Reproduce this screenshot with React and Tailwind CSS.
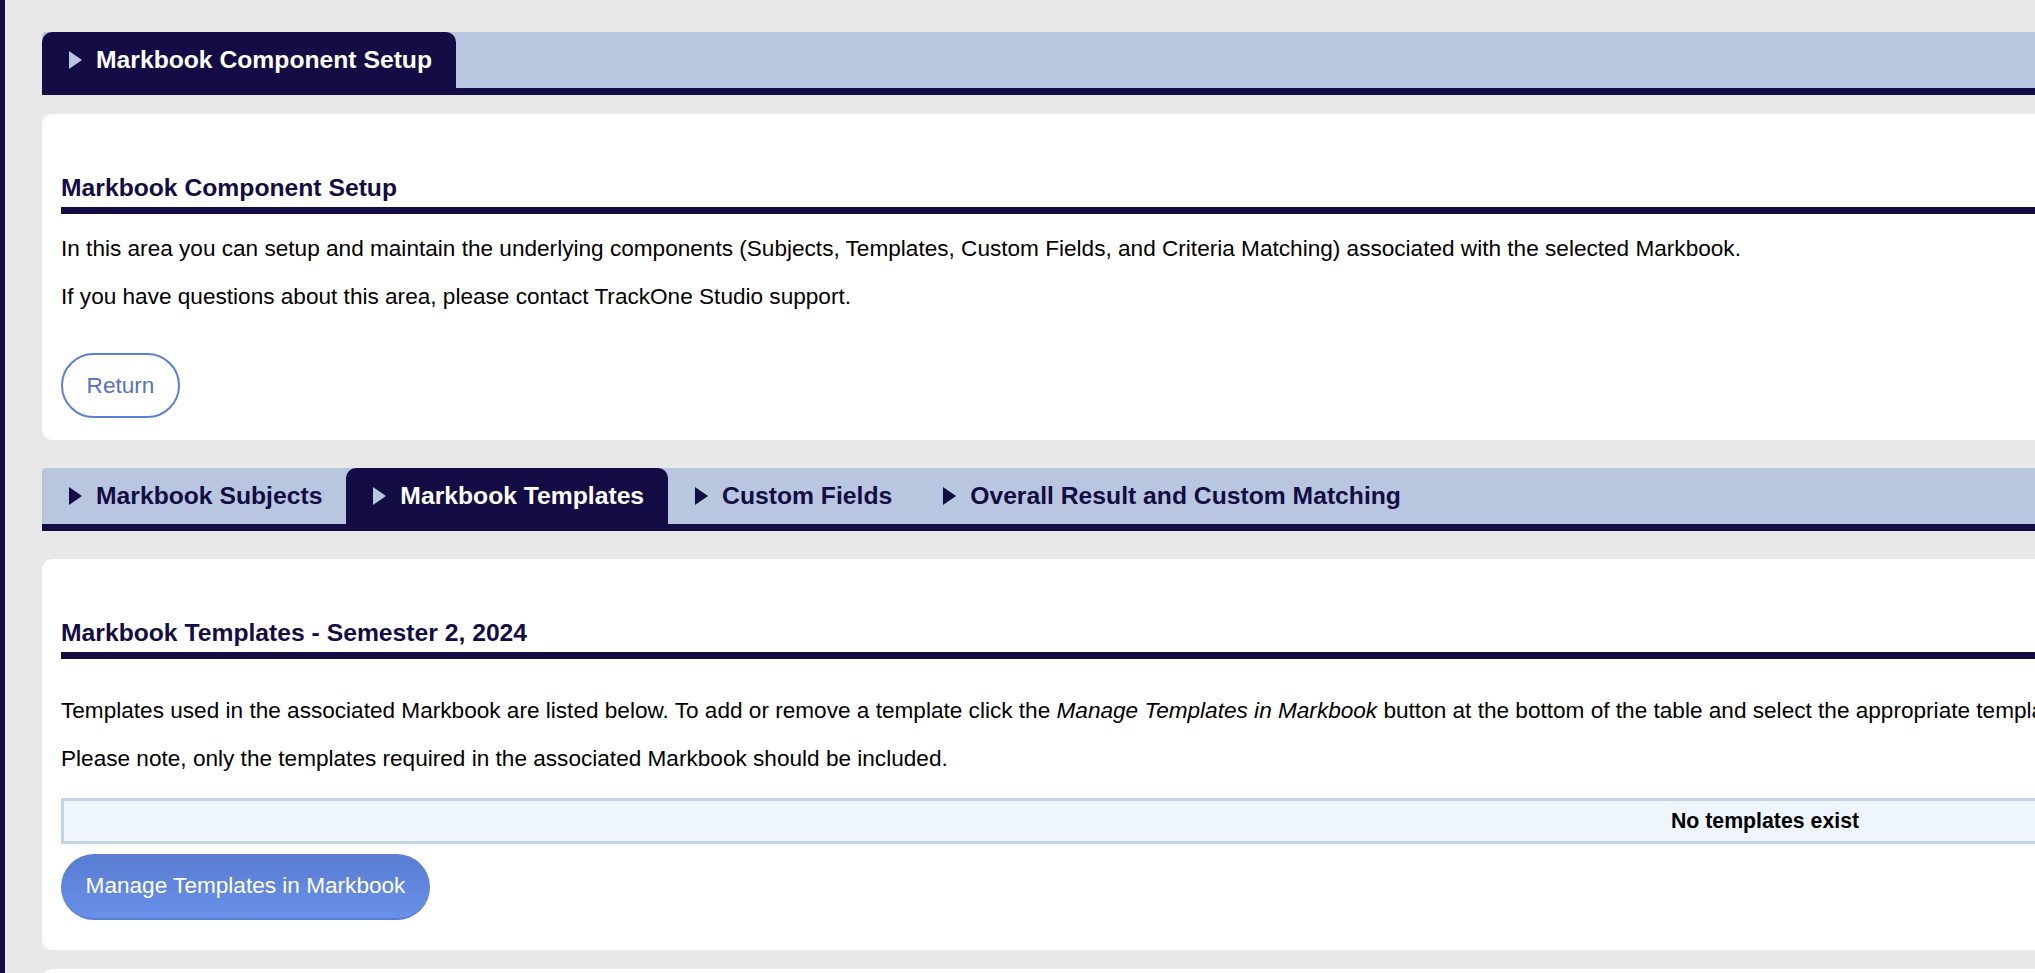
import React from "react";

function Tri({ light }) {
  return (
    <svg width="13" height="18" viewBox="0 0 13 18" className="shrink-0">
      <polygon points="0,0 13,9 0,18" fill={light ? "#b9c6e0" : "#140c44"} />
    </svg>
  );
}

function Tab({ label, active }) {
  return (
    <div
      className={
        active
          ? "h-full flex items-center gap-[14px] pl-[27px] pr-[24px] rounded-t-[10px] bg-[#140c44] text-white"
          : "h-full flex items-center gap-[14px] pl-[27px] pr-[24px] text-[#140c44]"
      }
    >
      <Tri light={active} />
      <span className="text-[24.7px] leading-[28px] font-bold whitespace-nowrap">{label}</span>
    </div>
  );
}

function TabBar({ children }) {
  return (
    <div className="flex h-[63px] bg-[#b9c6e0] border-b-[7px] border-[#140c44] rounded-tl-[4px]">
      {children}
    </div>
  );
}

function Heading({ children }) {
  return (
    <h2 className="text-[24.7px] leading-[28px] font-bold text-[#140c44] pb-[5px] border-b-[7px] border-[#140c44] whitespace-nowrap">
      {children}
    </h2>
  );
}

export default function App() {
  return (
    <div className="w-screen h-screen overflow-hidden flex bg-[#e8e8e8] font-['Liberation_Sans',Arial,sans-serif] text-black">
      <div className="w-[5px] shrink-0 bg-[#140c44]" />
      <div className="pl-[37px] pt-[32px] shrink-0">
        <div className="w-[3446px]">
          <TabBar>
            <Tab label="Markbook Component Setup" active />
          </TabBar>

          <div className="mt-[19px] bg-white rounded-[10px] px-[19px] pt-[60px] pb-[22px]">
            <Heading>Markbook Component Setup</Heading>
            <p className="mt-[22px] text-[22.6px] leading-[26px] whitespace-nowrap">
              In this area you can setup and maintain the underlying components (Subjects, Templates, Custom Fields, and Criteria Matching) associated with the selected Markbook.
            </p>
            <p className="mt-[22px] text-[22.6px] leading-[26px] whitespace-nowrap">
              If you have questions about this area, please contact TrackOne Studio support.
            </p>
            <button className="mt-[43px] h-[65px] w-[119px] rounded-full border-[2.5px] border-[#5b7fd3] bg-white text-[#5870c4] text-[22.6px] leading-[26px] flex items-center justify-center">
              Return
            </button>
          </div>

          <div className="mt-[28px]">
            <TabBar>
              <Tab label="Markbook Subjects" />
              <Tab label="Markbook Templates" active />
              <Tab label="Custom Fields" />
              <Tab label="Overall Result and Custom Matching" />
            </TabBar>
          </div>

          <div className="mt-[28px] bg-white rounded-[10px] px-[19px] pt-[60px] pb-[30px]">
            <Heading>Markbook Templates - Semester 2, 2024</Heading>
            <p className="mt-[39px] text-[22.6px] leading-[26px] whitespace-nowrap">
              Templates used in the associated Markbook are listed below. To add or remove a template click the <i>Manage Templates in Markbook</i> button at the bottom of the table and select the appropriate templates.
            </p>
            <p className="mt-[22px] text-[22.6px] leading-[26px] whitespace-nowrap">
              Please note, only the templates required in the associated Markbook should be included.
            </p>
            <div className="mt-[26px] h-[46px] border-[3px] border-[#c4d2e7] bg-[#eef5fd] flex items-center justify-center">
              <span className="font-bold text-[21.3px] leading-[24px]">No templates exist</span>
            </div>
            <button className="mt-[10px] h-[66px] w-[369px] rounded-full bg-gradient-to-b from-[#5a7cd1] to-[#6991e9] border-b-[2px] border-[#5a7dd2] text-white text-[22.6px] leading-[26px] flex items-center justify-center whitespace-nowrap">
              Manage Templates in Markbook
            </button>
          </div>

          <div className="mt-[19px] h-[200px] bg-white rounded-[10px]" />
        </div>
      </div>
    </div>
  );
}
